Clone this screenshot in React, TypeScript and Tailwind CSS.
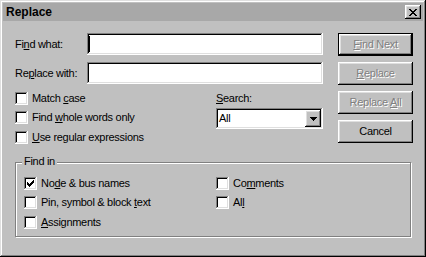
import React from 'react'

const raised =
  'shadow-[inset_-1px_-1px_#000,inset_1px_1px_#fff,inset_-2px_-2px_#808080,inset_2px_2px_#dfdfdf]'
const sunken =
  'shadow-[inset_-1px_-1px_#fff,inset_1px_1px_#808080,inset_-2px_-2px_#dfdfdf,inset_2px_2px_#000]'

const Check = ({ checked, children }: { checked?: boolean; children: React.ReactNode }) => (
  <div className="flex h-[13px] items-center">
    <div className={`w-[13px] h-[13px] bg-white shrink-0 flex items-center justify-center ${sunken}`}>
      {checked && (
        <svg width="7" height="7" viewBox="0 0 7 7" shapeRendering="crispEdges">
          <rect x="6" y="0" width="1" height="3" fill="#000" />
          <rect x="5" y="1" width="1" height="3" fill="#000" />
          <rect x="4" y="2" width="1" height="3" fill="#000" />
          <rect x="3" y="3" width="1" height="3" fill="#000" />
          <rect x="2" y="4" width="1" height="3" fill="#000" />
          <rect x="1" y="3" width="1" height="3" fill="#000" />
          <rect x="0" y="2" width="1" height="3" fill="#000" />
        </svg>
      )}
    </div>
    <span className="ml-[4px] whitespace-nowrap leading-[13px]">{children}</span>
  </div>
)

const Button = ({
  children,
  disabled,
  isDefault,
}: {
  children: React.ReactNode
  disabled?: boolean
  isDefault?: boolean
}) => (
  <div
    className={`w-[75px] h-[23px] flex items-center justify-center ${
      isDefault
        ? 'shadow-[inset_0_0_0_1px_#000,inset_-2px_-2px_#000,inset_2px_2px_#fff,inset_-3px_-3px_#808080,inset_3px_3px_#dfdfdf]'
        : raised
    } ${disabled ? 'text-[#808080] [text-shadow:1px_1px_0_#fff]' : 'text-black'}`}
  >
    {children}
  </div>
)

export default function App() {
  return (
    <div className="w-[426px] h-[257px] bg-[#c0c0c0] p-[3px] flex flex-col text-[11px] tracking-[-0.3px] text-black font-['Liberation_Sans',Arial,sans-serif] shadow-[inset_-1px_-1px_#000,inset_1px_1px_#dfdfdf,inset_-2px_-2px_#808080,inset_2px_2px_#fff]">
      {/* title bar */}
      <div className="h-[18px] bg-[#a8a8a8] flex items-center justify-between pl-[3px] pr-[2px]">
        <span className="font-bold text-[12px] tracking-normal">Replace</span>
        <div className={`w-[16px] h-[14px] bg-[#c0c0c0] flex items-center justify-center ${raised}`}>
          <svg width="8" height="7" viewBox="0 0 8 7" shapeRendering="crispEdges">
            <path d="M0 0h2v1h-2zM6 0h2v1h-2zM1 1h2v1h-2zM5 1h2v1h-2zM2 2h4v1h-4zM3 3h2v1h-2zM2 4h4v1h-4zM1 5h2v1h-2zM5 5h2v1h-2zM0 6h2v1h-2zM6 6h2v1h-2z" fill="#000" />
          </svg>
        </div>
      </div>

      {/* top section */}
      <div className="flex pl-[12px] pt-[12px]">
        <div className="w-[308px] flex flex-col">
          <div className="flex h-[22px] items-center">
            <span className="w-[72px]">
              Fi<u>n</u>d what:
            </span>
            <div className={`w-[236px] h-[22px] bg-white flex items-center pl-[2px] ${sunken}`}>
              <div className="w-[1px] h-[16px] bg-black" />
            </div>
          </div>
          <div className="flex h-[22px] items-center mt-[7px]">
            <span className="w-[72px]">
              Re<u>p</u>lace with:
            </span>
            <div className={`w-[236px] h-[22px] bg-white ${sunken}`} />
          </div>

          <div className="flex mt-[8px]">
            <div className="w-[201px] flex flex-col">
              <Check>
                Match <u>c</u>ase
              </Check>
              <div className="mt-[6px]">
                <Check>
                  Find <u>w</u>hole words only
                </Check>
              </div>
              <div className="mt-[7px]">
                <Check>
                  <u>U</u>se regular expressions
                </Check>
              </div>
            </div>
            <div className="w-[107px] flex flex-col">
              <span className="h-[13px] leading-[13px]">
                <u>S</u>earch:
              </span>
              <div className={`mt-[3px] w-[107px] h-[21px] bg-white flex items-center justify-between pl-[3px] pr-[2px] ${sunken}`}>
                <span>All</span>
                <div className={`w-[16px] h-[17px] bg-[#c0c0c0] flex items-center justify-center ${raised}`}>
                  <svg width="7" height="4" viewBox="0 0 7 4" shapeRendering="crispEdges">
                    <path d="M0 0h7v1h-7zM1 1h5v1h-5zM2 2h3v1h-3zM3 3h1v1h-1z" fill="#000" />
                  </svg>
                </div>
              </div>
            </div>
          </div>
        </div>

        <div className="ml-[15px] flex flex-col gap-[6px]">
          <Button isDefault disabled>
            <span>
              <u>F</u>ind Next
            </span>
          </Button>
          <Button disabled>
            <span>
              <u>R</u>eplace
            </span>
          </Button>
          <Button disabled>
            <span>
              Replace <u>A</u>ll
            </span>
          </Button>
          <Button>Cancel</Button>
        </div>
      </div>

      {/* find in group */}
      <div className="relative ml-[12px] mt-[18px] w-[396px] h-[75px] border border-[#808080] shadow-[1px_1px_0_#fff,inset_1px_1px_0_#fff] pl-[8px] pt-[14px]">
        <span className="absolute left-[6px] top-[-8px] bg-[#c0c0c0] px-[2px] leading-[13px]">Find in</span>
        <div className="flex">
          <div className="w-[192px] flex flex-col">
            <Check checked>
              No<u>d</u>e &amp; bus names
            </Check>
            <div className="mt-[6px]">
              <Check>
                Pin, symbol &amp; block <u>t</u>ext
              </Check>
            </div>
            <div className="mt-[7px]">
              <Check>
                <u>A</u>ssignments
              </Check>
            </div>
          </div>
          <div className="flex flex-col">
            <Check>
              Co<u>m</u>ments
            </Check>
            <div className="mt-[6px]">
              <Check>
                Al<u>l</u>
              </Check>
            </div>
          </div>
        </div>
      </div>
    </div>
  )
}
